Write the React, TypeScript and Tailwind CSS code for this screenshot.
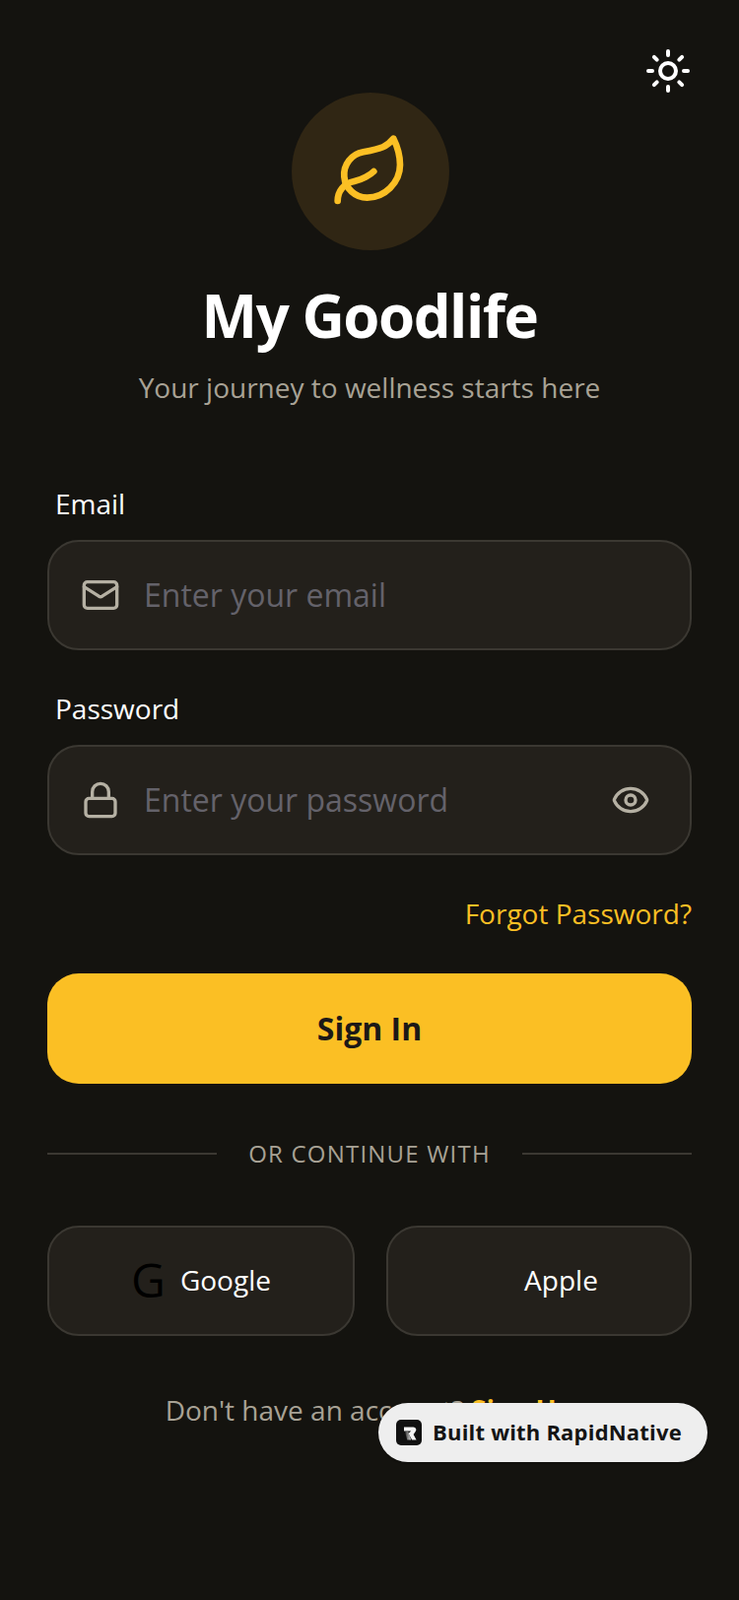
import { FC } from 'react';
import { Eye, Leaf, Lock, Mail, Sun } from 'lucide-react';

const FONT = "font-['Open_Sans','Noto_Sans',sans-serif]";

const RapidLogo: FC = () => (
  <svg width="26" height="26" viewBox="0 0 26 26" className="shrink-0">
    <defs>
      <linearGradient id="rapid-stem" x1="0" y1="0" x2="1" y2="0">
        <stop offset="0" stopColor="#333333" />
        <stop offset="1" stopColor="#d8d8d8" />
      </linearGradient>
    </defs>
    <rect width="26" height="26" rx="5" fill="#111111" />
    <path
      d="M8 7.5h9.5a2.8 2.8 0 0 1 2.2 4.6L17.6 15l3 5.5h-4.4L12.5 14l2.7-2.6H8z"
      fill="#f4f4f4"
    />
    <path d="M9 12h3.2l3 8.5h-4z" fill="url(#rapid-stem)" />
  </svg>
);

const App: FC = () => {
  return (
    <div
      className={`${FONT} relative min-h-[1624px] w-[750px] overflow-hidden bg-[#14130f] px-12 pt-[94px]`}
    >
      <button className="absolute top-12 right-12 text-white">
        <Sun size={48} strokeWidth={2} />
      </button>

      <div className="flex flex-col items-center">
        <div className="ml-0.5 flex h-40 w-40 items-center justify-center rounded-full bg-[#302614]">
          <Leaf size={80} strokeWidth={2} className="text-[#fbbf24]" />
        </div>
        <h1 className="mt-7 text-[60px] leading-[76px] font-bold tracking-[-1.5px] text-white">
          My Goodlife
        </h1>
        <p className="mt-[15px] text-[28px] leading-[40px] text-[#a8a295]">
          Your journey to wellness starts here
        </p>
      </div>

      <div className="mt-[78px]">
        <label className="block px-2 text-[28px] leading-[40px] text-white">
          Email
        </label>
        <div className="mt-[17px] flex h-[112px] items-center gap-6 rounded-[32px] border-2 border-[#3b3832] bg-[#23201b] pl-8 pr-10">
          <Mail size={40} strokeWidth={2} className="shrink-0 text-[#b5b0a3]" />
          <input
            className="w-full bg-transparent text-[32px] text-white outline-none placeholder:text-[#64626a]"
            placeholder="Enter your email"
            type="email"
          />
        </div>

        <label className="mt-[39px] block px-2 text-[28px] leading-[40px] text-white">
          Password
        </label>
        <div className="mt-[17px] flex h-[112px] items-center gap-6 rounded-[32px] border-2 border-[#3b3832] bg-[#23201b] pl-8 pr-10">
          <Lock size={40} strokeWidth={2} className="shrink-0 text-[#b5b0a3]" />
          <input
            className="w-full bg-transparent text-[32px] text-white outline-none placeholder:text-[#64626a]"
            placeholder="Enter your password"
            type="password"
          />
          <Eye size={40} strokeWidth={2} className="shrink-0 text-[#b5b0a3]" />
        </div>

        <div className="mt-[39px] text-right text-[28px] leading-[40px] text-[#fbbf24]">
          Forgot Password?
        </div>

        <button className="mt-[41px] flex h-[112px] w-full items-center justify-center rounded-[32px] bg-[#fbbf24] text-[32px] font-bold text-[#1c1917]">
          Sign In
        </button>
      </div>

      <div className="mt-[59px] flex items-center gap-8">
        <div className="h-0.5 flex-1 bg-[#3b3832]" />
        <span className="text-[24px] leading-[24px] tracking-[1.2px] text-[#a8a295]">
          OR CONTINUE WITH
        </span>
        <div className="h-0.5 flex-1 bg-[#3b3832]" />
      </div>

      <div className="mt-[61px] flex gap-8">
        <button className="flex h-[112px] w-[312px] items-center justify-center gap-[15px] rounded-[32px] border-2 border-[#3b3832] bg-[#23201b] pb-0.5 text-[28px] text-white">
          <span className="text-[48px] leading-none text-black">G</span>
          Google
        </button>
        <button className="flex h-[112px] flex-1 items-center justify-center gap-[15px] rounded-[32px] border-2 border-[#3b3832] bg-[#23201b] pb-0.5 text-[28px] text-white">
          <span className="w-[30px]" />
          Apple
        </button>
      </div>

      <p className="mt-[55px] text-center text-[28px] leading-[40px] text-[#a8a295]">
        Don't have an account?{' '}
        <span className="font-bold text-[#fbbf24]">Sign Up</span>
      </p>

      <div className="absolute top-[1424px] left-[384px] flex h-[60px] w-[334px] items-center gap-[11px] rounded-full bg-[#eeeeee] pl-[18px] shadow-[0_1px_2px_rgba(0,0,0,0.3)]">
        <RapidLogo />
        <span className="pb-0.5 text-[22px] leading-none font-bold tracking-[0.2px] text-[#141414]">
          Built with RapidNative
        </span>
      </div>
    </div>
  );
};

export default App;
